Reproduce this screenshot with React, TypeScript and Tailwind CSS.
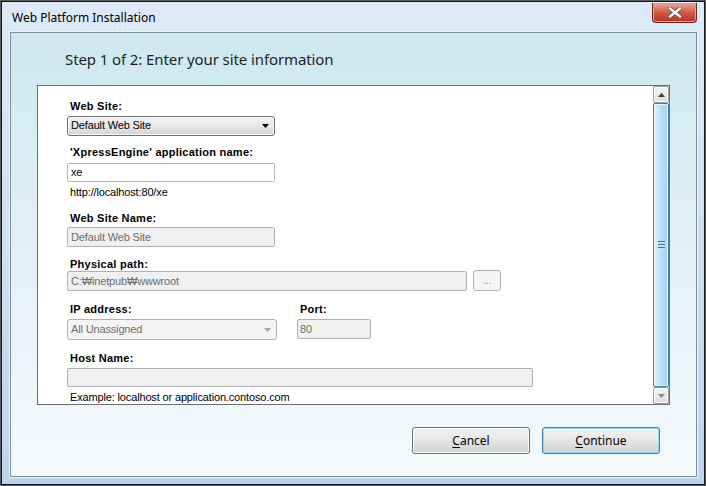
import React from "react";

const lbl = "ml-[3px] h-[13px] leading-[13px] text-[11px] font-bold tracking-[0.25px] text-black whitespace-nowrap";
const txt = "text-[11px] leading-[13px] tracking-[-0.15px] whitespace-nowrap";

function Arrow({ color }: { color: string }) {
  return (
    <svg width="7" height="4" viewBox="0 0 7 4">
      <path d="M0 0 L7 0 L3.5 4 Z" fill={color} />
    </svg>
  );
}

function Btn({ label, def }: { label: string; def?: boolean }) {
  return (
    <div
      className={
        "w-[118px] h-[27px] rounded-[3px] border flex items-center justify-center bg-linear-to-b from-[#f3f3f3] via-[#e6e6e6] to-[#d1d1d1] " +
        (def ? "border-[#3c7fb1] shadow-[inset_0_0_0_1px_#8fdcf8]" : "border-[#707070] shadow-[inset_0_0_0_1px_#fcfcfc]")
      }
      style={{ fontFamily: '"Noto Sans", sans-serif' }}
    >
      <span className="text-[12px] text-black">
        <span className="underline underline-offset-2">{label[0]}</span>
        {label.slice(1)}
      </span>
    </div>
  );
}

export default function App() {
  return (
    <div className="w-[706px] h-[486px] overflow-hidden border border-[#5c5c5c]" style={{ fontFamily: '"Liberation Sans", Arial, sans-serif' }}>
      <div className="w-full h-full border border-[#151515] flex flex-col pl-[8px] pr-[7px] pb-[7px] bg-linear-to-b from-[#dde9f6] via-[#cfe0f2] to-[#bcd5ec]">
        {/* title bar */}
        <div className="h-[30px] flex items-start justify-between shrink-0">
          <div className="mt-[8px] ml-[2px] text-[12px] leading-[16px] text-black" style={{ fontFamily: '"Noto Sans", sans-serif' }}>
            Web Platform Installation
          </div>
          <div className="mt-[1px] mr-[0px] w-[45px] h-[20px] rounded-b-[4px] border border-t-0 border-[#6b2b20] bg-linear-to-b from-[#e8a898] via-[#cf5a45] to-[#b8321f] flex items-center justify-center shadow-[inset_0_0_0_1px_#e89a8a]">
            <svg width="14" height="11" viewBox="0 0 14 11">
              <path d="M2 1.5 L12 9.5 M12 1.5 L2 9.5" stroke="#4a4a4a" strokeWidth="4" strokeLinecap="square" />
              <path d="M2 1.5 L12 9.5 M12 1.5 L2 9.5" stroke="#ffffff" strokeWidth="2.4" strokeLinecap="square" />
            </svg>
          </div>
        </div>
        {/* client */}
        <div className="flex-1 border border-[#7b8d9f] shadow-[0_0_0_1px_#eef5fb] bg-linear-to-b from-[#cde8f0] via-[#e2f1f6] to-[#f5f9fc] flex flex-col">
          <div className="h-[52px] flex items-center pl-[54px] shrink-0">
            <div className="text-[15px] text-[#1e1e1e] tracking-[-0.1px]" style={{ fontFamily: '"Noto Sans", sans-serif' }}>
              Step 1 of 2: Enter your site information
            </div>
          </div>
          <div className="ml-[26px] w-[633px] h-[320px] border border-[#6e6e6e] bg-white flex shrink-0">
            <div className="flex-1 overflow-hidden pl-[29px] flex flex-col">
              <div className={lbl + " mt-[14px]"}>Web Site:</div>
              <div className="mt-[3px] w-[208px] h-[20px] rounded-[3px] border border-[#707070] bg-linear-to-b from-[#f2f2f2] via-[#e9e9e9] to-[#d2d2d2] flex items-center justify-between pl-[3px] pr-[5px] shadow-[inset_0_0_0_1px_#f8f8f8]">
                <span className={txt + " text-black"}>Default Web Site</span>
                <Arrow color="#000000" />
              </div>
              <div className={lbl + " mt-[10px]"}>'XpressEngine' application name:</div>
              <div className="mt-[4px] w-[208px] h-[20px] rounded-[2px] border border-[#abb9c9] border-t-[#9aabbd] bg-white flex items-center pl-[3px]">
                <span className={txt + " text-black"}>xe</span>
              </div>
              <div className={txt + " mt-[4px] ml-[3px] text-black"}>http://localhost:80/xe</div>
              <div className={lbl + " mt-[13px]"}>Web Site Name:</div>
              <div className="mt-[2px] w-[208px] h-[20px] rounded-[2px] border border-[#aeb2b6] bg-[#f0f0f0] flex items-center pl-[3px]">
                <span className={txt + " text-[#6d6d6d]"}>Default Web Site</span>
              </div>
              <div className={lbl + " mt-[11px]"}>Physical path:</div>
              <div className="flex items-start">
                <div className="w-[400px] h-[20px] rounded-[2px] border border-[#aeb2b6] bg-[#f0f0f0] flex items-center pl-[3px]">
                  <span className={txt + " text-[#6d6d6d]"}>C:₩inetpub₩wwwroot</span>
                </div>
                <div className="ml-[6px] -mt-[1px] w-[28px] h-[21px] rounded-[3px] border border-[#aeb2b6] bg-[#f4f4f4] flex items-center justify-center">
                  <span className="text-[10px] text-[#8a8a8a] leading-none">...</span>
                </div>
              </div>
              <div className="flex mt-[12px]">
                <div className="w-[230px] flex flex-col">
                  <div className={lbl}>IP address:</div>
                  <div className="mt-[3px] w-[210px] h-[21px] rounded-[3px] border border-[#aeb2b6] bg-[#f4f4f4] flex items-center justify-between pl-[3px] pr-[5px]">
                    <span className={txt + " text-[#6d6d6d]"}>All Unassigned</span>
                    <Arrow color="#a2a2a2" />
                  </div>
                </div>
                <div className="flex flex-col">
                  <div className={lbl}>Port:</div>
                  <div className="mt-[3px] w-[74px] h-[20px] rounded-[2px] border border-[#aeb2b6] bg-[#f0f0f0] flex items-center pl-[2px]">
                    <span className={txt + " text-[#6d6d6d]"}>80</span>
                  </div>
                </div>
              </div>
              <div className={lbl + " mt-[12px]"}>Host Name:</div>
              <div className="mt-[3px] w-[466px] h-[19px] rounded-[2px] border border-[#aeb2b6] bg-[#f0f0f0] shrink-0" />
              <div className={txt + " mt-[4px] ml-[3px] text-black"}>Example: localhost or application.contoso.com</div>
            </div>
            {/* scrollbar */}
            <div className="w-[16px] flex flex-col bg-[#f0f0f0]">
              <div className="h-[17px] rounded-[2px] border border-[#9b9b9b] bg-linear-to-b from-[#f6f6f6] to-[#dcdcdc] flex items-center justify-center shadow-[inset_0_0_0_1px_#ffffff] shrink-0">
                <svg width="7" height="4" viewBox="0 0 7 4"><path d="M3.5 0 L7 4 L0 4 Z" fill="#3b3b3b" /></svg>
              </div>
              <div className="flex-1 rounded-[2px] border border-[#3c7fb1] bg-linear-to-r from-[#e3f4fc] via-[#b9def7] to-[#a2d0ef] flex items-center justify-center shadow-[inset_0_0_0_1px_#e8f6fd]">
                <div className="flex flex-col gap-[1px]">
                  <div className="w-[7px] h-[2px] bg-[#2e7bb0] border-b border-[#c8e6f8]" />
                  <div className="w-[7px] h-[2px] bg-[#2e7bb0] border-b border-[#c8e6f8]" />
                  <div className="w-[7px] h-[2px] bg-[#2e7bb0] border-b border-[#c8e6f8]" />
                </div>
              </div>
              <div className="h-[17px] rounded-[2px] border border-[#9b9b9b] bg-linear-to-b from-[#f6f6f6] to-[#dcdcdc] flex items-center justify-center shadow-[inset_0_0_0_1px_#ffffff] shrink-0">
                <Arrow color="#8a8a8a" />
              </div>
            </div>
          </div>
          <div className="mt-[22px] flex justify-end gap-[12px] pr-[36px]">
            <Btn label="Cancel" />
            <Btn label="Continue" def />
          </div>
        </div>
      </div>
    </div>
  );
}
